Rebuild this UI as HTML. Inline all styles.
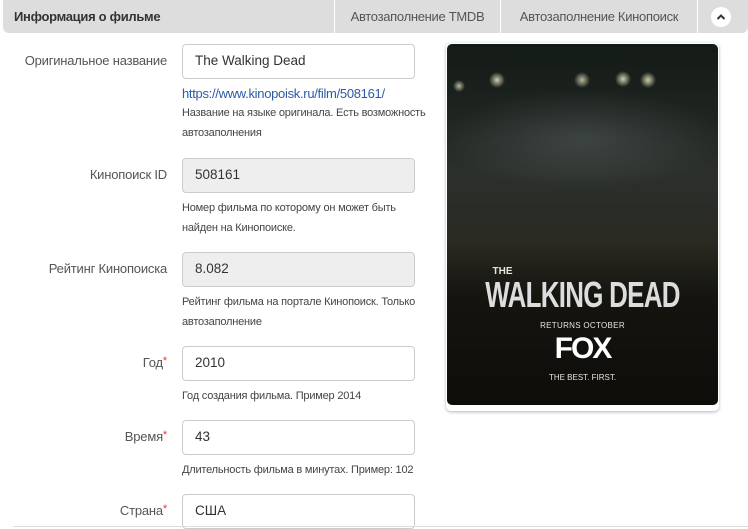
<!DOCTYPE html>
<html><head><meta charset="utf-8"><style>
*{box-sizing:border-box;margin:0;padding:0}
body{width:748px;height:529px;overflow:hidden;background:#fff;font-family:"Liberation Sans",sans-serif;position:relative;color:#555}
.hdr{position:absolute;left:3px;top:0;width:745px;height:33px;background:#ddd;border-radius:0 0 6px 6px}
.hdr .t{position:absolute;left:11px;top:9px;font-size:13px;font-weight:bold;color:#333;letter-spacing:-0.3px}
.tab{position:absolute;top:0;height:33px;border-left:1px solid #fff;font-size:13px;color:#555;line-height:33px;text-align:center;letter-spacing:-0.3px}
.btn{position:absolute;left:708px;top:7px;width:20px;height:20px;border-radius:50%;background:#fff}
.lbl{position:absolute;right:581px;font-size:13px;color:#555;white-space:nowrap;letter-spacing:-0.2px}
.lbl b{color:#e33;font-weight:normal;font-size:11px;vertical-align:top}
.in{position:absolute;left:182px;width:233px;height:35px;border:1px solid #ccc;border-radius:4px;font-size:13.5px;color:#333;padding:8px 12px;background:#fff}
.in.d{background:#eee}
.h{position:absolute;left:182px;font-size:11px;color:#444;white-space:nowrap;overflow:hidden;width:248px;letter-spacing:-0.2px}
a{position:absolute;left:182px;top:86px;font-size:13px;color:#2a5aa8;text-decoration:none;letter-spacing:-0.3px}
.card{position:absolute;left:446px;top:43px;width:273px;height:368px;border-radius:5px;box-shadow:0 1px 3px rgba(0,0,0,.3);background:#fff}
.post{position:absolute;left:447px;top:44px;width:271px;height:361px;border-radius:5px;overflow:hidden;
background:radial-gradient(circle 8px at 50px 36px,rgba(255,250,210,.8),transparent),radial-gradient(circle 8px at 176px 35px,rgba(255,250,210,.8),transparent),radial-gradient(circle 8px at 201px 36px,rgba(255,250,210,.8),transparent),radial-gradient(circle 8px at 135px 36px,rgba(255,250,210,.7),transparent),radial-gradient(circle 6px at 12px 42px,rgba(255,250,210,.7),transparent),radial-gradient(ellipse 140px 50px at 135px 95px,rgba(120,130,130,.3),transparent),linear-gradient(#141b17 0%,#1e2420 20%,#2b302c 35%,#2a2a22 55%,#15140f 70%,#0e0d0a 100%)}
.post div{position:absolute;width:100%;text-align:center;color:#e6e4dc}
</style></head><body>
<div class="hdr"><span class="t">Информация о фильме</span>
<div class="tab" style="left:331px;width:166px">Автозаполнение TMDB</div>
<div class="tab" style="left:497px;width:197px">Автозаполнение Кинопоиск</div>
<div class="tab" style="left:694px;width:51px;border-left:1px solid #fff"></div>
<div class="btn"><svg width="20" height="20"><path d="M6.5 12 L10 8.5 L13.5 12" stroke="#334" stroke-width="2" fill="none"/></svg></div>
</div>

<div class="lbl" style="top:53px">Оригинальное название</div>
<div class="in" style="top:44px">The Walking Dead</div>
<a>https://www.kinopoisk.ru/film/508161/</a>
<div class="h" style="top:107px">Название на языке оригинала. Есть возможность</div>
<div class="h" style="top:127px">автозаполнения</div>

<div class="lbl" style="top:167px">Кинопоиск ID</div>
<div class="in d" style="top:158px">508161</div>
<div class="h" style="top:202px">Номер фильма по которому он может быть</div>
<div class="h" style="top:222px">найден на Кинопоиске.</div>

<div class="lbl" style="top:261px">Рейтинг Кинопоиска</div>
<div class="in d" style="top:252px">8.082</div>
<div class="h" style="top:296px">Рейтинг фильма на портале Кинопоиск. Только</div>
<div class="h" style="top:316px">автозаполнение</div>

<div class="lbl" style="top:355px">Год<b>*</b></div>
<div class="in" style="top:346px">2010</div>
<div class="h" style="top:390px">Год создания фильма. Пример 2014</div>

<div class="lbl" style="top:429px">Время<b>*</b></div>
<div class="in" style="top:420px">43</div>
<div class="h" style="top:464px">Длительность фильма в минутах. Пример: 102</div>

<div class="lbl" style="top:503px">Страна<b>*</b></div>
<div class="in" style="top:494px">США</div>
<div style="position:absolute;left:13px;top:526px;width:735px;height:1px;background:#ddd"></div>

<div class="card"></div>
<div class="post">
<div style="top:222px;font-size:10px;font-weight:bold;left:-80px">THE</div>
<div style="top:230px;font-size:36px;font-weight:bold;letter-spacing:-1px;color:#ddd;transform:scaleX(0.72)">WALKING DEAD</div>
<div style="top:277px;font-size:8px;letter-spacing:0.3px">RETURNS OCTOBER</div>
<div style="top:288px;font-size:30px;font-weight:900;letter-spacing:-2px;color:#fff">FOX</div>
<div style="top:329px;font-size:8px">THE BEST. FIRST.</div>
</div>
</body></html>
